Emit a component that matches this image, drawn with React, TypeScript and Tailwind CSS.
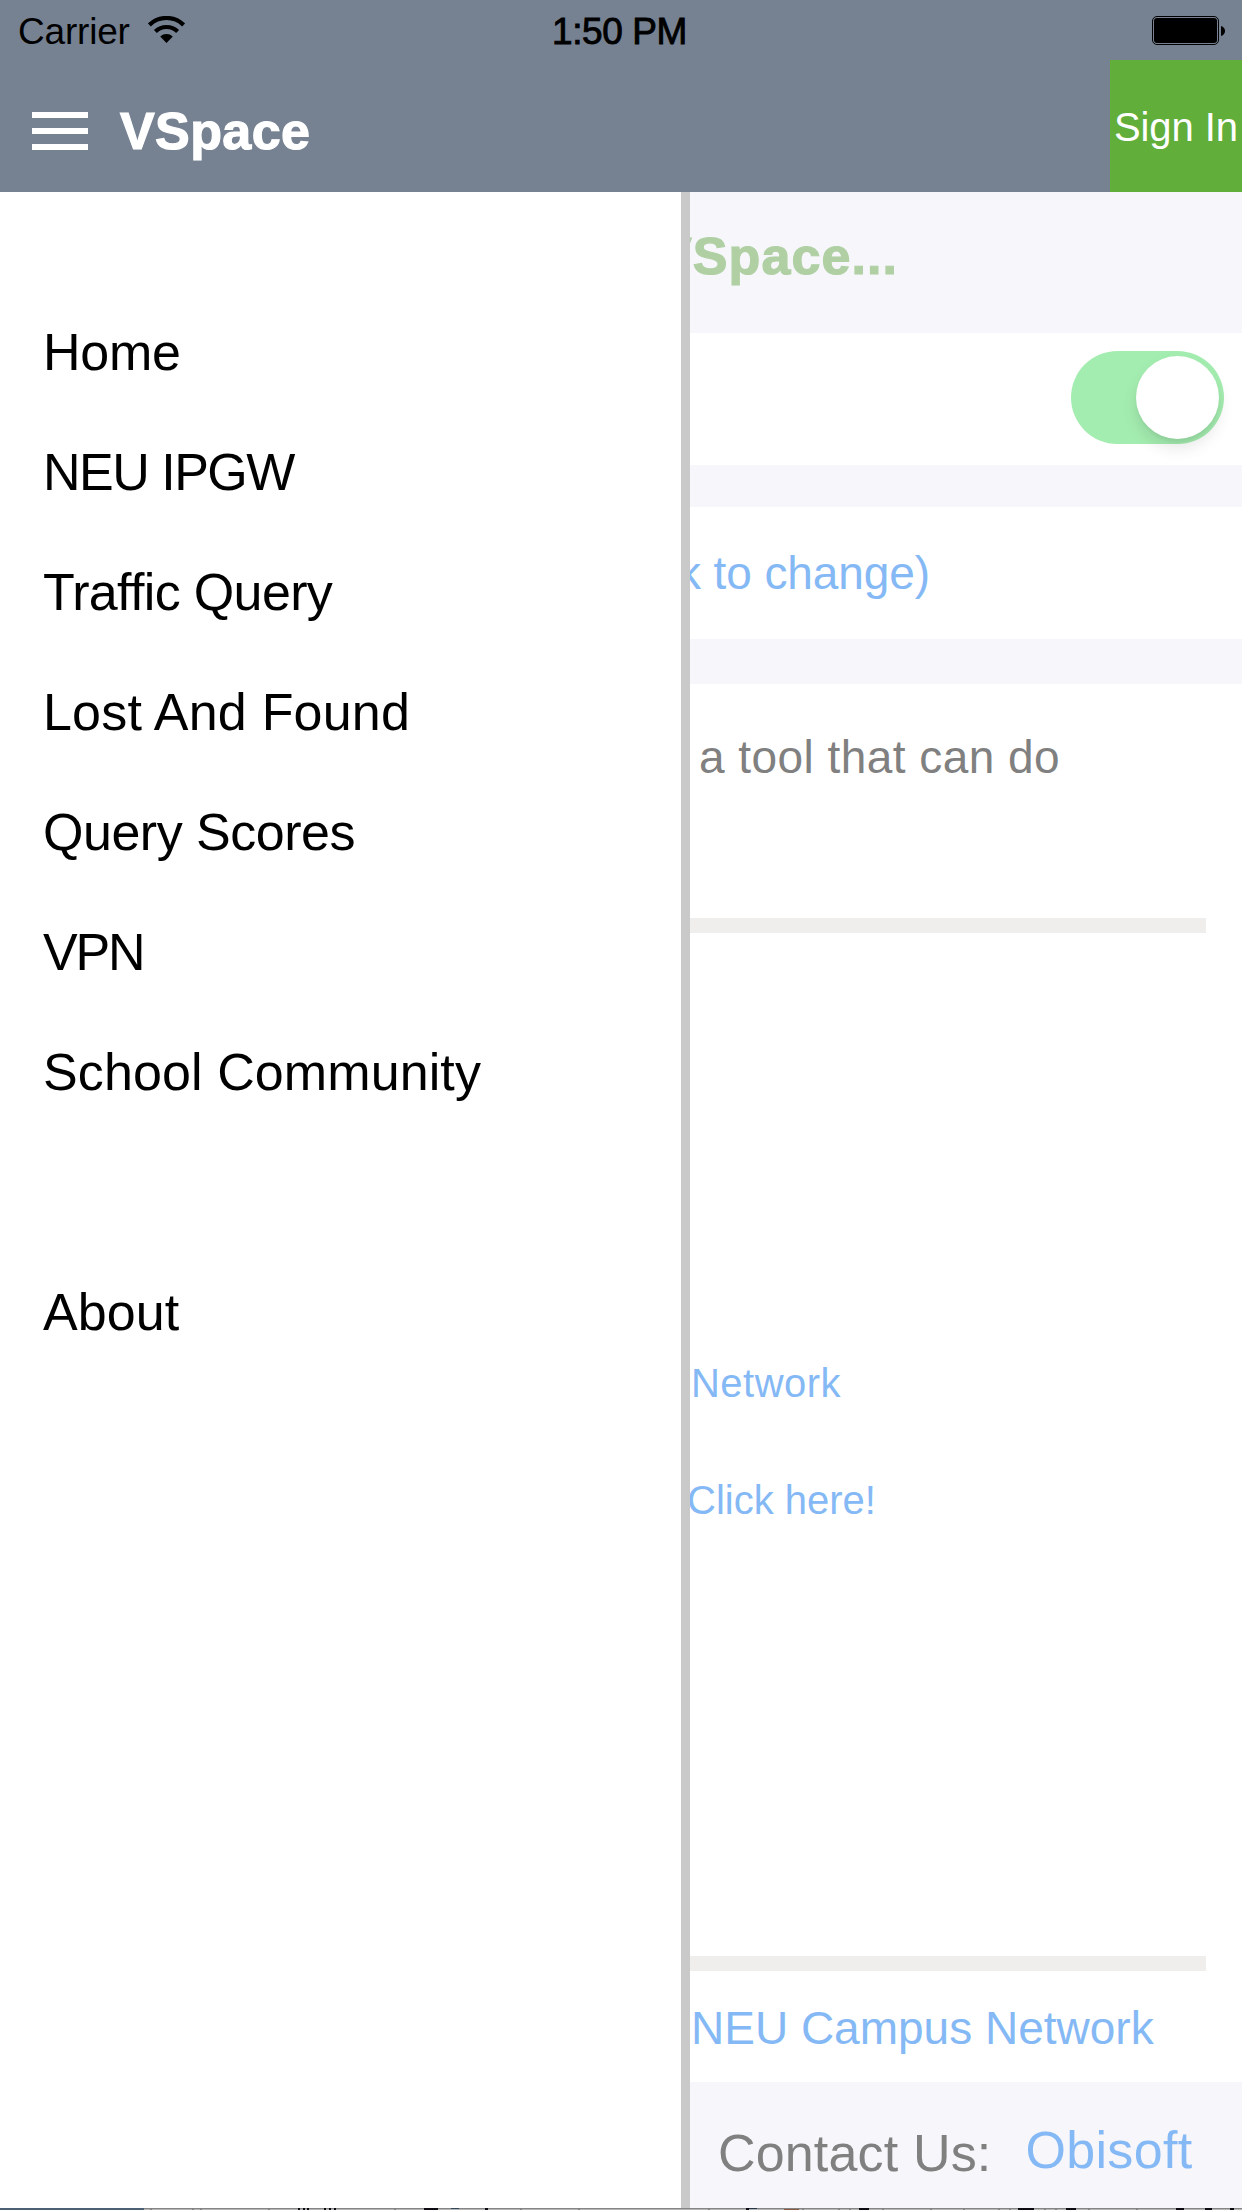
import React from 'react';

const menu = [
  { label: 'Home', style: 'tracking-[-0.25px] pl-[43px]' },
  { label: 'NEU IPGW', style: 'tracking-[-1.5px] pl-[43px]' },
  { label: 'Traffic Query', style: 'tracking-[-0.65px] pl-[43px]' },
  { label: 'Lost And Found', style: 'tracking-[0.2px] pl-[43px]' },
  { label: 'Query Scores', style: 'tracking-[-0.49px] pl-[43px]' },
  { label: 'VPN', style: 'tracking-[-2.2px] pl-[43px]' },
  { label: 'School Community', style: 'tracking-[0.1px] pl-[43px]' },
  { label: '', style: '' },
  { label: 'About', style: 'tracking-[0.07px] pl-[43px]' },
];

function WifiIcon() {
  return (
    <svg className="mt-4 ml-[18px] h-[27px] w-[37px]" viewBox="0 0 37 27" fill="none" stroke="#000" strokeWidth="4.2">
      <path d="M1.4 8.900a24.500 24.500 0 0 1 34.200 0" />
      <path d="M7.400 15.500a16 16 0 0 1 22.200 0" />
      <path d="M12.200 20.600a9.200 9.200 0 0 1 12.600 0L18.500 27z" fill="#000" stroke="none" />
    </svg>
  );
}

function BatteryIcon() {
  return (
    <svg className="mt-4 h-[29px] w-[74px]" viewBox="0 0 74 29">
      <rect x="0.5" y="0.5" width="66" height="28" rx="4.5" fill="none" stroke="#000" />
      <rect x="2" y="2" width="63" height="25" rx="3" fill="#000" />
      <path d="M69 10c5.400 1.500 5.400 8.500 0 10z" fill="#000" />
    </svg>
  );
}

function DockSliver() {
  const ticks = [150, 192, 200, 268, 394, 520, 578, 708, 802, 838, 849, 882, 930, 963, 998, 1009, 1044, 1055, 1088, 1136];
  const dark = [
    [298, 2], [303, 2], [307, 2], [324, 2], [329, 2], [334, 2], [424, 14], [485, 3], [746, 3],
    [859, 10], [1018, 16], [1066, 10], [1176, 8], [1205, 7], [1230, 4],
  ];
  return (
    <svg className="block h-[2px] w-full" viewBox="0 0 1242 2" shapeRendering="crispEdges">
      <rect width="1242" height="1" fill="#858585" />
      <rect y="1" width="1242" height="1" fill="#b5b5b5" />
      <rect width="144" height="2" fill="#4b6075" />
      {ticks.map((x) => <rect key={x} x={x} width="2" height="2" fill="#848484" />)}
      {dark.map(([x, w]) => <rect key={x} x={x} width={w} height="2" fill="#0d0a12" />)}
      <rect x="451" width="8" height="1" fill="#30495c" />
      <rect x="749" width="8" height="1" fill="#24384a" />
      <rect x="784" y="1" width="15" height="1" fill="#8a5b42" />
    </svg>
  );
}

export default function App() {
  return (
    <div className="flex h-[2210px] w-[1242px] flex-col overflow-hidden bg-white font-['Liberation_Sans',Arial,sans-serif] whitespace-nowrap text-black">
      <header className="h-[192px] shrink-0 bg-[#768292]">
        <div className="grid h-[60px] grid-cols-3 text-[37px] leading-[64px]">
          <div className="flex pl-[18px]">
            <span className="tracking-[-0.2px]">Carrier</span>
            <WifiIcon />
          </div>
          <span className="pl-[138px] tracking-[-0.4px] [-webkit-text-stroke:0.9px_#000]">1:50 PM</span>
          <div className="flex justify-end pr-4"><BatteryIcon /></div>
        </div>
        <div className="flex h-[132px] text-white">
          <button className="ml-8 flex flex-col gap-[10px] pt-[52px]" aria-label="Menu">
            <span className="h-[6px] w-14 bg-white" />
            <span className="h-[6px] w-14 bg-white" />
            <span className="h-[6px] w-14 bg-white" />
          </button>
          <h1 className="ml-8 text-[52px] leading-[142px] font-bold tracking-[0.4px] [-webkit-text-stroke:1.2px_#fff]">VSpace</h1>
          <button className="ml-auto flex w-[132px] bg-[#61ae3a] pl-1 text-[40px] leading-[134px] tracking-[-0.1px]">Sign In</button>
        </div>
      </header>

      <div className="flex h-[2016px] shrink-0">
        <nav className="w-[681px] shrink-0 bg-white pt-[100px] text-[52px] leading-[120px]">
          {menu.map((item, i) => (
            <div key={i} className={`h-[120px] ${item.style}`}>{item.label}</div>
          ))}
        </nav>
        <div className="w-[9px] shrink-0 bg-[#c9c9c9]" />
        <main className="flex w-[552px] flex-col overflow-hidden bg-[#f6f6fb]">
          <h2 className="ml-[-33px] h-[141px] shrink-0 text-[52px] leading-[128px] font-bold tracking-[1.1px] text-[#b0d0a4] [-webkit-text-stroke:1.2px_#b0d0a4]">VSpace...</h2>
          <div className="flex h-[132px] shrink-0 justify-end bg-white pt-[18px] pr-[18px]">
            <div className="flex h-[93px] w-[153px] justify-end rounded-full bg-[#a4edb0] p-[5px]">
              <div className="size-[83px] rounded-full bg-white shadow-[0_9px_16px_rgba(0,0,0,0.1),0_3px_3px_rgba(0,0,0,0.04)]" />
            </div>
          </div>
          <div className="mt-[42px] h-[132px] shrink-0 bg-white text-[46px] leading-[132px] tracking-[-0.1px] text-[#85b9f5]">
            <span className="ml-[-12px]">k to change)</span>
          </div>
          <section className="mt-[45px] h-[1398px] shrink-0 bg-white pt-[43px] leading-[60px] text-[#85b9f5]">
            <p className="ml-[9px] text-[46px] tracking-[0.45px] text-[#808080]">a tool that can do</p>
            <div className="mt-[131px] mr-9 h-[15px] bg-[#efeeed]" />
            <p className="mt-[420px] ml-px text-[40px] tracking-[0.48px]">Network</p>
            <p className="mt-[57px] ml-[-3px] text-[40px]">Click here!</p>
            <div className="mt-[426px] mr-9 h-[15px] bg-[#efeeed]" />
            <p className="mt-[27px] ml-px text-[46px]">NEU Campus Network</p>
          </section>
          <footer className="flex h-[126px] shrink-0 pl-7 text-[52px]">
            <span className="leading-[142px] tracking-[0.16px] text-[#808080]">Contact Us:</span>
            <span className="ml-[34px] leading-[136px] tracking-[0.33px] text-[#85b9f5]">Obisoft</span>
          </footer>
        </main>
      </div>
      <DockSliver />
    </div>
  );
}
